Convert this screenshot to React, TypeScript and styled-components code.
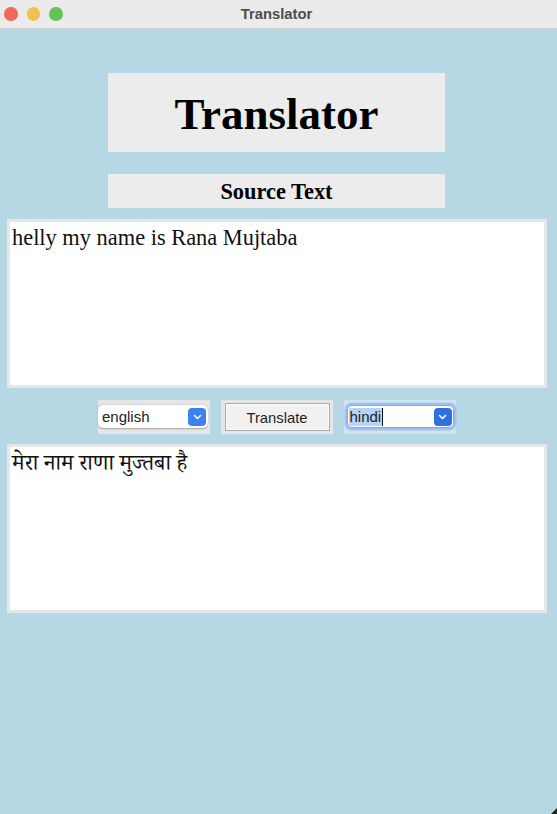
import { type FC } from 'react';
import styled, { createGlobalStyle } from 'styled-components';

const GlobalStyle = createGlobalStyle`
  html, body {
    margin: 0;
    padding: 0;
    background: #b6d8e4;
  }
`;

const Window = styled.div`
  width: 557px;
  height: 814px;
  background: #b6d8e4;
  display: flex;
  flex-direction: column;
  position: relative;
  overflow: hidden;
`;

const TitleBar = styled.div`
  height: 28px;
  flex: none;
  background: #ebebeb;
  border-bottom: 1px solid #d3d3d3;
  display: flex;
  align-items: center;
  gap: 9px;
  padding-left: 4px;
  position: relative;
`;

const Light = styled.span<{ $color: string }>`
  width: 13.5px;
  height: 13.5px;
  border-radius: 50%;
  background: ${(p) => p.$color};
`;

const WindowTitle = styled.div`
  position: absolute;
  left: 0;
  right: 4px;
  top: 0;
  bottom: 0;
  display: flex;
  align-items: center;
  justify-content: center;
  font-family: 'Liberation Sans', Arial, sans-serif;
  font-weight: bold;
  font-size: 14.8px;
  color: #4c4c4c;
  pointer-events: none;
`;

const Content = styled.main`
  display: flex;
  flex-direction: column;
  align-items: center;
  padding: 44px 4px 0 0;
`;

const HeadingBox = styled.div<{ $height: number; $size: number; $gap: number }>`
  box-sizing: border-box;
  width: 337px;
  height: ${(p) => p.$height}px;
  margin-bottom: ${(p) => p.$gap}px;
  padding-top: 2px;
  background: #ececec;
  display: flex;
  align-items: center;
  justify-content: center;
  font-family: 'Liberation Serif', 'Times New Roman', serif;
  font-weight: bold;
  font-size: ${(p) => p.$size}px;
  color: #000;
`;

const TextBox = styled.textarea`
  box-sizing: border-box;
  width: 540px;
  height: 169px;
  margin: 0 0 0 1px;
  border: 3px solid #e7e7e7;
  background: #fff;
  padding: 3px 2px;
  resize: none;
  outline: none;
  font-family: 'Liberation Serif', 'Times New Roman', 'Noto Serif Devanagari', 'Noto Sans Devanagari', serif;
  font-size: 22.4px;
  line-height: 25px;
  color: #111;
`;

const Controls = styled.div`
  display: flex;
  gap: 11px;
  margin: 12px 0 10px;
`;

const Frame = styled.div<{ $focus?: boolean }>`
  box-sizing: border-box;
  width: 112px;
  height: 34px;
  background: ${(p) => (p.$focus ? '#d3e2f2' : '#e6e6e6')};
  padding: ${(p) => (p.$focus ? '5px 2px 6px 3px' : '5px 1.5px 6px 0.5px')};
  display: flex;
`;

const ButtonFrame = styled(Frame)`
  padding: 3px 3px 3px 4px;
`;

const SelectBox = styled.div<{ $focus?: boolean }>`
  flex: 1;
  display: flex;
  align-items: center;
  justify-content: space-between;
  background: #fff;
  border-radius: 5px;
  padding: 0 2px 0 ${(p) => (p.$focus ? 2 : 4)}px;
  box-shadow: ${(p) =>
    p.$focus
      ? '0 0 0 2.5px #9fc1ef, inset 0 0 0 1px #7aa6ea'
      : '0 0.5px 1.5px rgba(0, 0, 0, 0.3)'};
  font-family: 'Liberation Sans', Arial, sans-serif;
  font-size: 15px;
  color: #222;
`;

const Selected = styled.span`
  background: #b5d3fb;
  border-right: 1.5px solid #111;
  padding: 0 0.5px 0 1px;
  line-height: 18px;
`;

const Arrow = styled.span<{ $dark?: boolean }>`
  width: 18px;
  height: 18px;
  border-radius: 4px;
  background: ${(p) => (p.$dark ? '#2f6fdf' : '#3a83f1')};
  display: flex;
  align-items: center;
  justify-content: center;
`;

const Button = styled.button`
  flex: 1;
  margin: 0;
  background: #f1f1f1;
  border: 1px solid #a9a9a9;
  box-shadow: inset 0 0 0 1px #fbfbfb;
  font-family: 'Liberation Sans', Arial, sans-serif;
  font-size: 14.8px;
  color: #1e1e1e;
  padding: 2px 0 0;
`;

const ResizeCorner = styled.svg`
  position: absolute;
  right: 0;
  bottom: 0;
`;

const Chevron: FC = () => (
  <svg width="9" height="6" viewBox="0 0 9 6">
    <path d="M1.5 1.5 L4.5 4.5 L7.5 1.5" fill="none" stroke="#fff" strokeWidth="1.6" strokeLinecap="round" strokeLinejoin="round" />
  </svg>
);

type SelectProps = { value: string; focus?: boolean };

const LangSelect: FC<SelectProps> = ({ value, focus }) => (
  <Frame $focus={focus}>
    <SelectBox $focus={focus}>
      {focus ? <Selected>{value}</Selected> : <span>{value}</span>}
      <Arrow $dark={focus}>
        <Chevron />
      </Arrow>
    </SelectBox>
  </Frame>
);

const App: FC = () => {
  return (
    <Window>
      <GlobalStyle />
      <TitleBar>
        <Light $color="#ee6a5e" />
        <Light $color="#f4bf4f" />
        <Light $color="#61c454" />
        <WindowTitle>Translator</WindowTitle>
      </TitleBar>
      <Content>
        <HeadingBox $height={79} $size={45} $gap={22}>Translator</HeadingBox>
        <HeadingBox $height={34} $size={22.4} $gap={11}>Source Text</HeadingBox>
        <TextBox defaultValue="helly my name is Rana Mujtaba" spellCheck={false} />
        <Controls>
          <LangSelect value="english" />
          <ButtonFrame>
            <Button>Translate</Button>
          </ButtonFrame>
          <LangSelect value="hindi" focus />
        </Controls>
        <TextBox defaultValue="मेरा नाम राणा मुज्तबा है" spellCheck={false} />
      </Content>
      <ResizeCorner width="6" height="6" viewBox="0 0 6 6">
        <path d="M6 0 L6 6 L0 6 Z" fill="#222" />
      </ResizeCorner>
    </Window>
  );
};

export default App;
